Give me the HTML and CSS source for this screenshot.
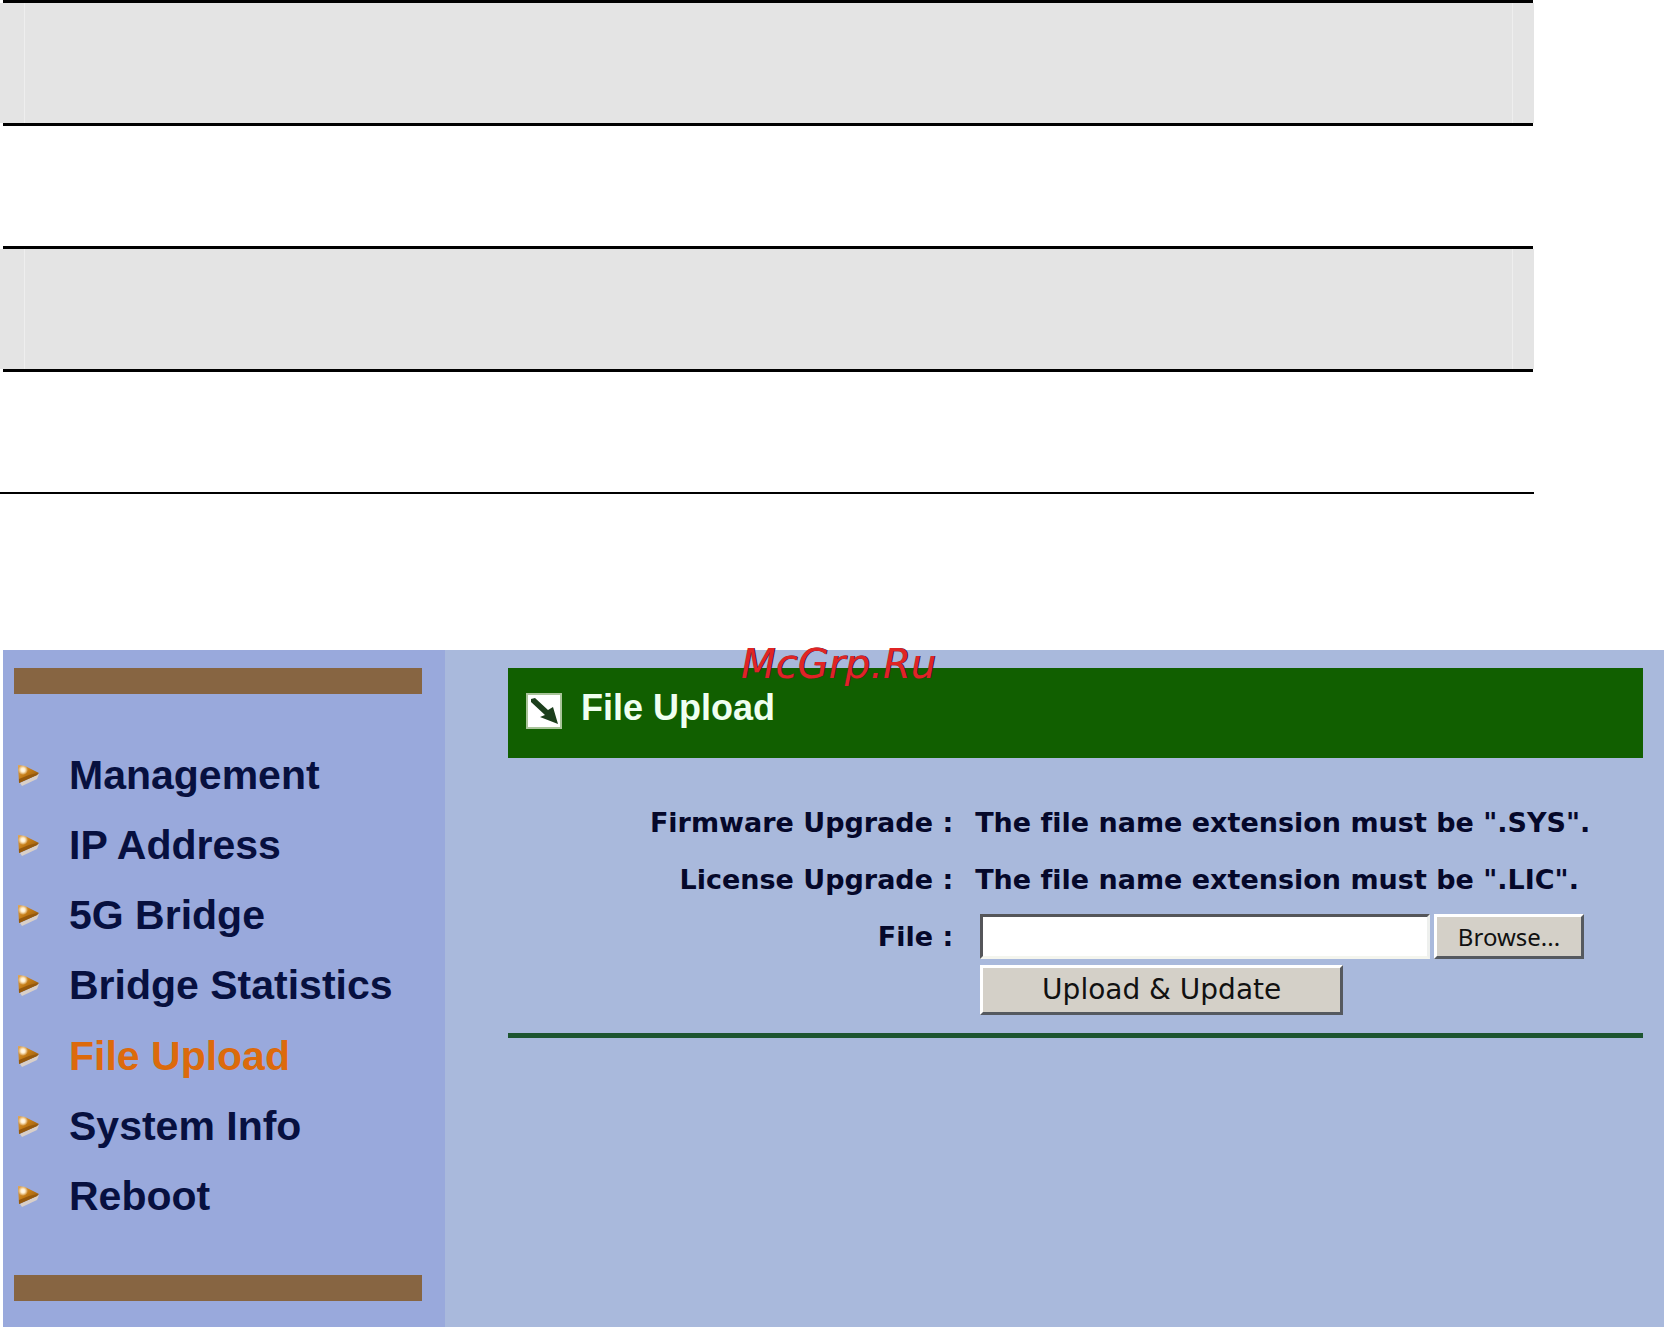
FILE: index.html
```
<!DOCTYPE html>
<html lang="en">

<head>
  <meta charset="UTF-8" />
  <meta name="viewport" content="width=device-width, initial-scale=1.0" />
  <title>File Upload</title>
  <link rel="stylesheet" href="styles.css">
</head>

<body>
  <svg class="defs" width="0" height="0" aria-hidden="true">
    <defs>
      <linearGradient id="gold" x1="0" y1="0" x2="1" y2="1">
        <stop offset="0" stop-color="#e8a850" />
        <stop offset="0.45" stop-color="#c27a14" />
        <stop offset="1" stop-color="#7d4c10" />
      </linearGradient>
      <radialGradient id="shine">
        <stop offset="0" stop-color="#fffaf0" />
        <stop offset="0.4" stop-color="#fff0d2" />
        <stop offset="1" stop-color="#fff0d2" stop-opacity="0" />
      </radialGradient>
      <symbol id="arrow" viewBox="0 0 24 24">
        <path d="M3 20 L5 23 L20 16 L22 11 Z" fill="#d9cfc8" />
        <path d="M1 2 L8 3 L22 10 L20 12 L2 20 Z" fill="url(#gold)" />
        <path d="M2 20 L2 16 L12 12 L21 10 L20 12 Z" fill="#96590c" />
        <circle cx="6" cy="7" r="5" fill="url(#shine)" />
      </symbol>
    </defs>
  </svg>

  <div class="notes">
    <div class="note"><div class="note-body"></div></div>
    <div class="note"><div class="note-body"></div></div>
    <hr class="note-end" />
  </div>

  <div class="device">
    <div class="watermark">McGrp.Ru</div>

    <nav class="sidebar">
      <div class="bar"></div>
      <ul class="menu">
        <li><svg><use href="#arrow" /></svg><a href="#">Management</a></li>
        <li><svg><use href="#arrow" /></svg><a href="#">IP Address</a></li>
        <li><svg><use href="#arrow" /></svg><a href="#">5G Bridge</a></li>
        <li><svg><use href="#arrow" /></svg><a href="#">Bridge Statistics</a></li>
        <li><svg><use href="#arrow" /></svg><a href="#" class="active">File Upload</a></li>
        <li><svg><use href="#arrow" /></svg><a href="#">System Info</a></li>
        <li><svg><use href="#arrow" /></svg><a href="#">Reboot</a></li>
      </ul>
      <div class="bar"></div>
    </nav>

    <main>
      <header>
        <svg class="title-icon" viewBox="0 0 36 36">
          <rect x="1" y="1" width="34" height="34" fill="#fff" stroke="#a9c49a" stroke-width="2" />
          <path d="M5 9 L5 6 L9 5 L22 17 L27 14 L32 31 L14 24 L19 22 Z" fill="#1c3f1c" />
        </svg>
        <h1>File Upload</h1>
      </header>

      <form class="upload-form">
        <span class="label">Firmware Upgrade :</span>
        <span>The file name extension must be ".SYS".</span>

        <span class="label">License Upgrade :</span>
        <span>The file name extension must be ".LIC".</span>

        <label class="label" for="fileName">File :</label>
        <div class="file-row">
          <input type="text" id="fileName" />
          <button type="button" class="browse">Browse...</button>
        </div>

        <button type="submit" class="submit">Upload &amp; Update</button>
      </form>
      <hr class="rule" />
    </main>
  </div>
</body>

</html>
```
FILE: styles.css
```
* {
  margin: 0;
  padding: 0;
  box-sizing: border-box;
}

body {
  display: flex;
  flex-direction: column;
  min-height: 100vh;
  background: #fff;
  font-family: "Liberation Sans", Arial, sans-serif;
}

.defs {
  position: absolute;
}

/* empty note boxes above the device page */
.notes {
  margin-right: 130px;
  padding-bottom: 156px;
}

.note {
  margin-bottom: 120px;
  background: linear-gradient(#000, #000) 3px 0 / calc(100% - 4px) 3px no-repeat,
    linear-gradient(#000, #000) 3px 100% / calc(100% - 4px) 3px no-repeat;
  padding: 3px 0;
}

.note-body {
  height: 120px;
  padding: 0 21px 0 24px;
  background: #e4e4e4;
}

.note-body::before {
  content: "";
  display: block;
  height: 100%;
  border: solid #eee;
  border-width: 0 1px;
}

.note-end {
  border: none;
  height: 2px;
  background: #000;
}

.device {
  position: relative;
  flex: 1;
  display: flex;
  margin-left: 3px;
  background: #a9b9dc;
}

.watermark {
  position: absolute;
  top: 0;
  left: 50%;
  transform: translate(-50%, -50%);
  margin: 14px 0 0 5px;
  font: italic 40px/48px "DejaVu Sans", Verdana, sans-serif;
  color: #e02424;
  text-shadow: 1px 0 0 #301030;
}

.sidebar {
  display: flex;
  flex-direction: column;
  flex: 0 0 442px;
  padding: 18px 23px 26px 11px;
  background: #99a9dc;
}

.bar {
  height: 26px;
  background: #876542;
}

.menu {
  flex: 1;
  display: grid;
  grid-auto-rows: 1fr;
  padding: 46px 0 44px;
  list-style: none;
}

.menu li {
  display: flex;
  align-items: center;
  gap: 28px;
  padding-left: 3px;
}

.menu svg {
  width: 24px;
  height: 24px;
}

.menu a {
  font-size: 41px;
  font-weight: bold;
  line-height: 48px;
  color: #07103f;
  text-decoration: none;
  white-space: nowrap;
}

.menu a.active {
  color: #dc6a0c;
}

main {
  flex: 1;
  padding: 18px 21px 0 63px;
}

header {
  display: flex;
  align-items: flex-start;
  gap: 19px;
  min-height: 90px;
  padding: 18px;
  background: #115f00;
}

.title-icon {
  width: 36px;
  height: 36px;
  margin-top: 7px;
}

h1 {
  font-size: 36px;
  line-height: 44px;
  color: #f0fff0;
}

.upload-form {
  display: grid;
  grid-template-columns: 2fr 3fr;
  column-gap: 22px;
  align-items: center;
  padding: 36px 0 18px;
  font: bold 27px/57px "DejaVu Sans", Verdana, sans-serif;
  font-variant-ligatures: none;
  color: #05082a;
  white-space: nowrap;
}

.label {
  text-align: right;
}

.file-row {
  display: flex;
  gap: 4px;
  margin: 0 59px 0 5px;
}

.file-row input {
  flex: 1;
  min-width: 0;
  height: 45px;
  padding: 0 8px;
  border: 3px solid;
  border-color: #55565a #eef0ee #f4f5ee #55565a;
  background: #fff;
  font-size: 24px;
}

button {
  border: 3px solid;
  border-color: #fff #55595f #55595f #fff;
  background: #d4d0c8;
  color: #111;
}

.browse {
  width: 150px;
  font: 24px/30px "Noto Sans", Tahoma, sans-serif;
}

.submit {
  grid-column: 2;
  justify-self: start;
  width: 363px;
  height: 50px;
  margin-left: 5px;
  font: 28px/32px "DejaVu Sans", Verdana, sans-serif;
}

.rule {
  border: none;
  height: 5px;
  background: #1d5530;
}
```
